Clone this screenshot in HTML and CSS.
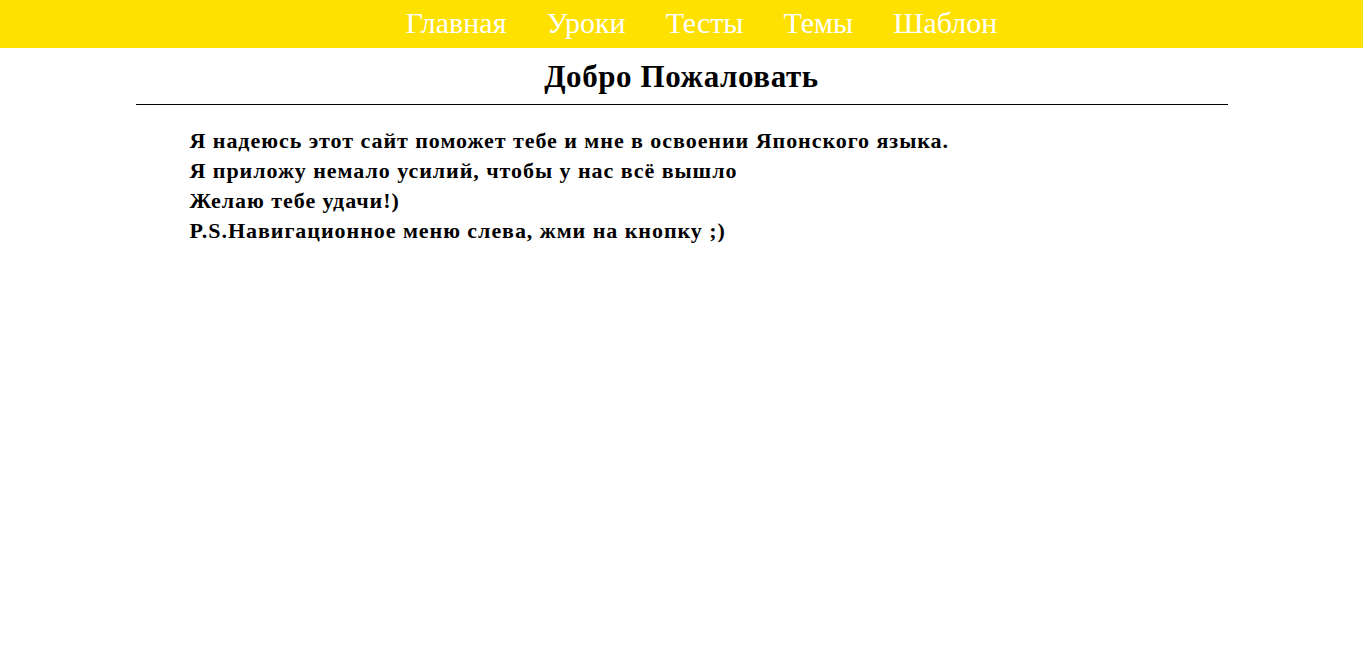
FILE: index.html
```html
<!DOCTYPE html>
<html lang="ru">
<head>
<meta charset="utf-8">
<title>Главная</title>
<link rel="stylesheet" href="styles.css">
</head>
<body>
<nav class="topnav">
  <ul class="menu">
    <li><a href="#">Главная</a></li>
    <li><a href="#">Уроки</a></li>
    <li><a href="#">Тесты</a></li>
    <li><a href="#">Темы</a></li>
    <li><a href="#">Шаблон</a></li>
  </ul>
</nav>
<main class="content">
  <h1 class="title">Добро Пожаловать</h1>
  <p class="intro">Я надеюсь этот сайт поможет тебе и мне в освоении Японского языка.<br>
  Я приложу немало усилий, чтобы у нас всё вышло<br>
  Желаю тебе удачи!)<br>
  P.S.Навигационное меню слева, жми на кнопку ;)</p>
</main>
</body>
</html>
```
FILE: styles.css
```css
html, body {
  margin: 0;
  padding: 0;
  background: #fff;
  font-family: "Liberation Serif", "Times New Roman", serif;
}
.topnav {
  background: #ffe100;
  height: 48px;
}
.menu {
  list-style: none;
  margin: 0;
  padding: 0 0 0 40px;
  display: flex;
  justify-content: center;
  height: 48px;
  align-items: center;
}
.menu li {
  padding: 0 20px;
}
.menu a {
  color: #fff;
  text-decoration: none;
  font-size: 30px;
  line-height: 34px;
  position: relative;
  top: -1px;
}
.content {
  width: 1092px;
  margin: 0 auto;
}
.title {
  margin: 0;
  padding: 12px 0 10px;
  text-align: center;
  font-size: 31px;
  letter-spacing: 0.6px;
  line-height: 34px;
  border-bottom: 1px solid #000;
}
.intro {
  margin: 21px 0 0 54px;
  font-size: 22px;
  font-weight: bold;
  letter-spacing: 0.95px;
  line-height: 30px;
}
```
